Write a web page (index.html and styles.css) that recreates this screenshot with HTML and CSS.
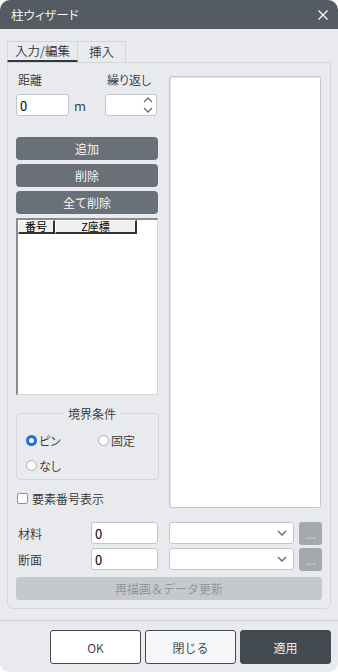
FILE: index.html
```html
<!DOCTYPE html>
<html lang="ja">
<head>
    <meta charset="UTF-8">
    <meta name="viewport" content="width=device-width, initial-scale=1.0">
    <title>柱ウィザード</title>
    <link rel="stylesheet" href="styles.css">
</head>
<body>
    <div class="window">
        <div class="titlebar">
            <span class="title">柱ウィザード</span>
            <svg class="close" width="10" height="10" viewBox="0 0 10 10">
                <path d="M0.5 0.5 L9.5 9.5 M9.5 0.5 L0.5 9.5" stroke="#fff" stroke-width="1.2" fill="none"/>
            </svg>
        </div>

        <div class="body">
            <div class="tabs">
                <div class="tab active">入力/編集</div>
                <div class="tab">挿入</div>
            </div>

            <div class="panel">
                <div class="top">
                    <div class="left">
                        <div class="params">
                            <div class="param dist">
                                <label for="dist">距離</label>
                                <div class="with-unit">
                                    <input type="text" id="dist" class="text-input short" value="0">
                                    <span class="unit">m</span>
                                </div>
                            </div>
                            <div class="param">
                                <label>繰り返し</label>
                                <div class="spin">
                                    <svg width="10" height="18" viewBox="0 0 10 18">
                                        <path d="M1 6 L5 2 L9 6 M1 12 L5 16 L9 12" stroke="#6b6f75" stroke-width="1.4" fill="none"/>
                                    </svg>
                                </div>
                            </div>
                        </div>

                        <div class="actions">
                            <button class="btn-dark">追加</button>
                            <button class="btn-dark">削除</button>
                            <button class="btn-dark">全て削除</button>
                        </div>

                        <div class="list">
                            <div class="list-head">
                                <div class="col-head no">番号</div>
                                <div class="col-head z">Z座標</div>
                            </div>
                        </div>

                        <fieldset class="group">
                            <legend>境界条件</legend>
                            <label class="radio"><span class="dot checked"></span>ピン</label>
                            <label class="radio"><span class="dot"></span>固定</label>
                            <label class="radio"><span class="dot"></span>なし</label>
                        </fieldset>

                        <label class="check"><span class="box"></span>要素番号表示</label>
                    </div>

                    <div class="preview"></div>
                </div>

                <div class="prop-row first">
                    <span class="prop-label">材料</span>
                    <input type="text" class="text-input prop" value="0">
                    <div class="select">
                        <svg width="10" height="6" viewBox="0 0 10 6"><path d="M1 1 L5 5 L9 1" stroke="#6b6f75" stroke-width="1.5" fill="none"/></svg>
                    </div>
                    <button class="btn-more">...</button>
                </div>
                <div class="prop-row">
                    <span class="prop-label">断面</span>
                    <input type="text" class="text-input prop" value="0">
                    <div class="select">
                        <svg width="10" height="6" viewBox="0 0 10 6"><path d="M1 1 L5 5 L9 1" stroke="#6b6f75" stroke-width="1.5" fill="none"/></svg>
                    </div>
                    <button class="btn-more">...</button>
                </div>

                <button class="btn-redraw" disabled>再描画＆データ更新</button>
            </div>
        </div>

        <div class="footer">
            <button class="btn-foot ok">OK</button>
            <button class="btn-foot close-btn">閉じる</button>
            <button class="btn-foot apply">適用</button>
        </div>
    </div>
</body>
</html>
```

FILE: styles.css
```css
body {
    margin: 0;
    background-color: #fff;
    font-family: "Noto Sans CJK JP", "Noto Sans", sans-serif;
    font-size: 12px;
    font-weight: 350;
    font-feature-settings: "palt";
    color: #333;
}

.window {
    width: 338px;
    height: 672px;
    background-color: #e9eaed;
    border-radius: 10px 10px 9px 9px;
    overflow: hidden;
    display: flex;
    flex-direction: column;
}

/* title bar */
.titlebar {
    height: 29px;
    background-color: #555b63;
    color: #fff;
    display: flex;
    align-items: center;
    justify-content: space-between;
    padding: 0 10px 0 11px;
    flex-shrink: 0;
}

.title {
    font-size: 12.5px;
    line-height: 17px;
}

.body {
    padding: 12px 7px 0 7px;
}

/* tabs */
.tabs {
    display: flex;
    height: 21px;
}

.tab {
    box-sizing: border-box;
    height: 21px;
    border: 1px solid #d3d5d9;
    border-bottom: none;
    line-height: 19px;
    padding: 0 11px;
    font-size: 12.5px;
}

.tab.active {
    padding: 0 7px;
    border-bottom: 2px solid #33383e;
    line-height: 18px;
}

.tab + .tab {
    border-left: none;
}

.panel {
    border: 1px solid #d3d5d9;
    border-radius: 0 0 6px 6px;
    padding: 8px 8px 8px 8px;
}

.top {
    display: grid;
    grid-template-columns: 142px 152px;
    column-gap: 11px;
}

/* left column */
.params {
    display: flex;
}

.param label {
    display: block;
    line-height: 17px;
    margin-bottom: 6px;
    padding-left: 2px;
}

.param.dist {
    width: 89px;
}

.with-unit {
    display: flex;
    align-items: center;
}

.text-input {
    box-sizing: border-box;
    height: 22px;
    border: 1px solid #c3c6ca;
    border-radius: 3px;
    background: #fff;
    font-family: inherit;
    font-weight: 400;
    font-size: 13px;
    color: #000;
    padding: 0 3px;
    outline: none;
}

.text-input.short {
    width: 53px;
}

.unit {
    margin-left: 5px;
    font-size: 13px;
}

.spin {
    box-sizing: border-box;
    width: 52px;
    height: 22px;
    border: 1px solid #c3c6ca;
    border-radius: 3px;
    background: #fff;
    display: flex;
    align-items: center;
    justify-content: flex-end;
    padding-right: 3px;
}

.actions {
    display: flex;
    flex-direction: column;
    gap: 4px;
    margin-top: 21px;
}

.btn-dark {
    height: 23px;
    border: none;
    border-radius: 4px;
    background-color: #6a7078;
    color: #fff;
    font-family: inherit;
    font-weight: 350;
    font-size: 12px;
    padding: 0;
}

.list {
    box-sizing: border-box;
    height: 177px;
    margin-top: 4px;
    background: #fff;
    border: 1px solid #d6d6d6;
    border-top: 2px solid #8c8c8c;
    border-left: 2px solid #8c8c8c;
}

.list-head {
    display: flex;
}

.col-head {
    box-sizing: border-box;
    height: 14px;
    background: #f0f0f0;
    border-top: 1px solid #fff;
    border-left: 1px solid #fff;
    border-right: 2px solid #333;
    border-bottom: 2px solid #333;
    font-size: 11px;
    font-weight: 400;
    line-height: 11px;
    text-align: center;
    color: #000;
}

.col-head.no {
    width: 37px;
}

.col-head.z {
    width: 82px;
}

/* boundary group */
.group {
    margin: 10px 0 0 0;
    padding: 8px 0 4px 9px;
    border: 1px solid #d3d5d9;
    border-radius: 4px;
    display: grid;
    grid-template-columns: 72px 60px;
    row-gap: 5px;
}

.group legend {
    margin: 0 auto;
    padding: 0 5px;
    line-height: 17px;
}

.radio {
    display: flex;
    align-items: center;
    height: 20px;
    gap: 2px;
}

.dot {
    box-sizing: border-box;
    width: 11px;
    height: 11px;
    border-radius: 50%;
    border: 1px solid #a9acb0;
    background: #fff;
}

.dot.checked {
    border: 3px solid #1a6fe0;
}

.check {
    display: flex;
    align-items: center;
    gap: 4px;
    height: 18px;
    margin-top: 9px;
    padding-left: 1px;
}

.box {
    box-sizing: border-box;
    width: 11px;
    height: 11px;
    border: 1px solid #8e9196;
    border-radius: 2px;
    background: #fff;
}

.preview {
    box-sizing: border-box;
    height: 432px;
    margin-top: 5px;
    background: #fff;
    border: 1px solid #c3c6ca;
    border-radius: 2px;
    box-shadow: inset 1px 1px 0 #e3e5e8;
}

/* property rows */
.prop-row {
    display: flex;
    align-items: center;
    height: 22px;
    margin-top: 4px;
}

.prop-row.first {
    margin-top: 14px;
}

.prop-label {
    width: 73px;
    padding-left: 2px;
}

.text-input.prop {
    width: 67px;
}

.select {
    box-sizing: border-box;
    width: 125px;
    height: 22px;
    margin-left: 11px;
    border: 1px solid #c3c6ca;
    border-radius: 3px;
    background: #fff;
    display: flex;
    align-items: center;
    justify-content: flex-end;
    padding-right: 6px;
}

.btn-more {
    width: 23px;
    height: 23px;
    margin-left: 5px;
    border: none;
    border-radius: 3px;
    background: #a5a8ad;
    color: #e4e5e7;
    font-size: 12px;
    padding: 4px 0 0 0;
    line-height: 14px;
}

.btn-redraw {
    display: block;
    width: 306px;
    height: 23px;
    margin-top: 7px;
    border: none;
    border-radius: 3px;
    background: #c5c9ce;
    color: #8d9196;
    font-family: inherit;
    font-weight: 350;
    font-size: 12px;
    padding: 0;
}

/* footer */
.footer {
    margin-top: 11px;
    border-top: 1px solid #c8cbcf;
    display: flex;
    justify-content: flex-end;
    gap: 4px;
    padding: 9px 7px 0 0;
}

.btn-foot {
    width: 91px;
    height: 34px;
    border: 1px solid #434a52;
    border-radius: 3px;
    font-family: inherit;
    font-weight: 350;
    font-size: 12px;
    color: #333;
    padding: 0;
}

.btn-foot.ok {
    background: #fff;
}

.btn-foot.close-btn {
    background: #f6f7f9;
}

.btn-foot.apply {
    background: #434a52;
    color: #fff;
}
```
